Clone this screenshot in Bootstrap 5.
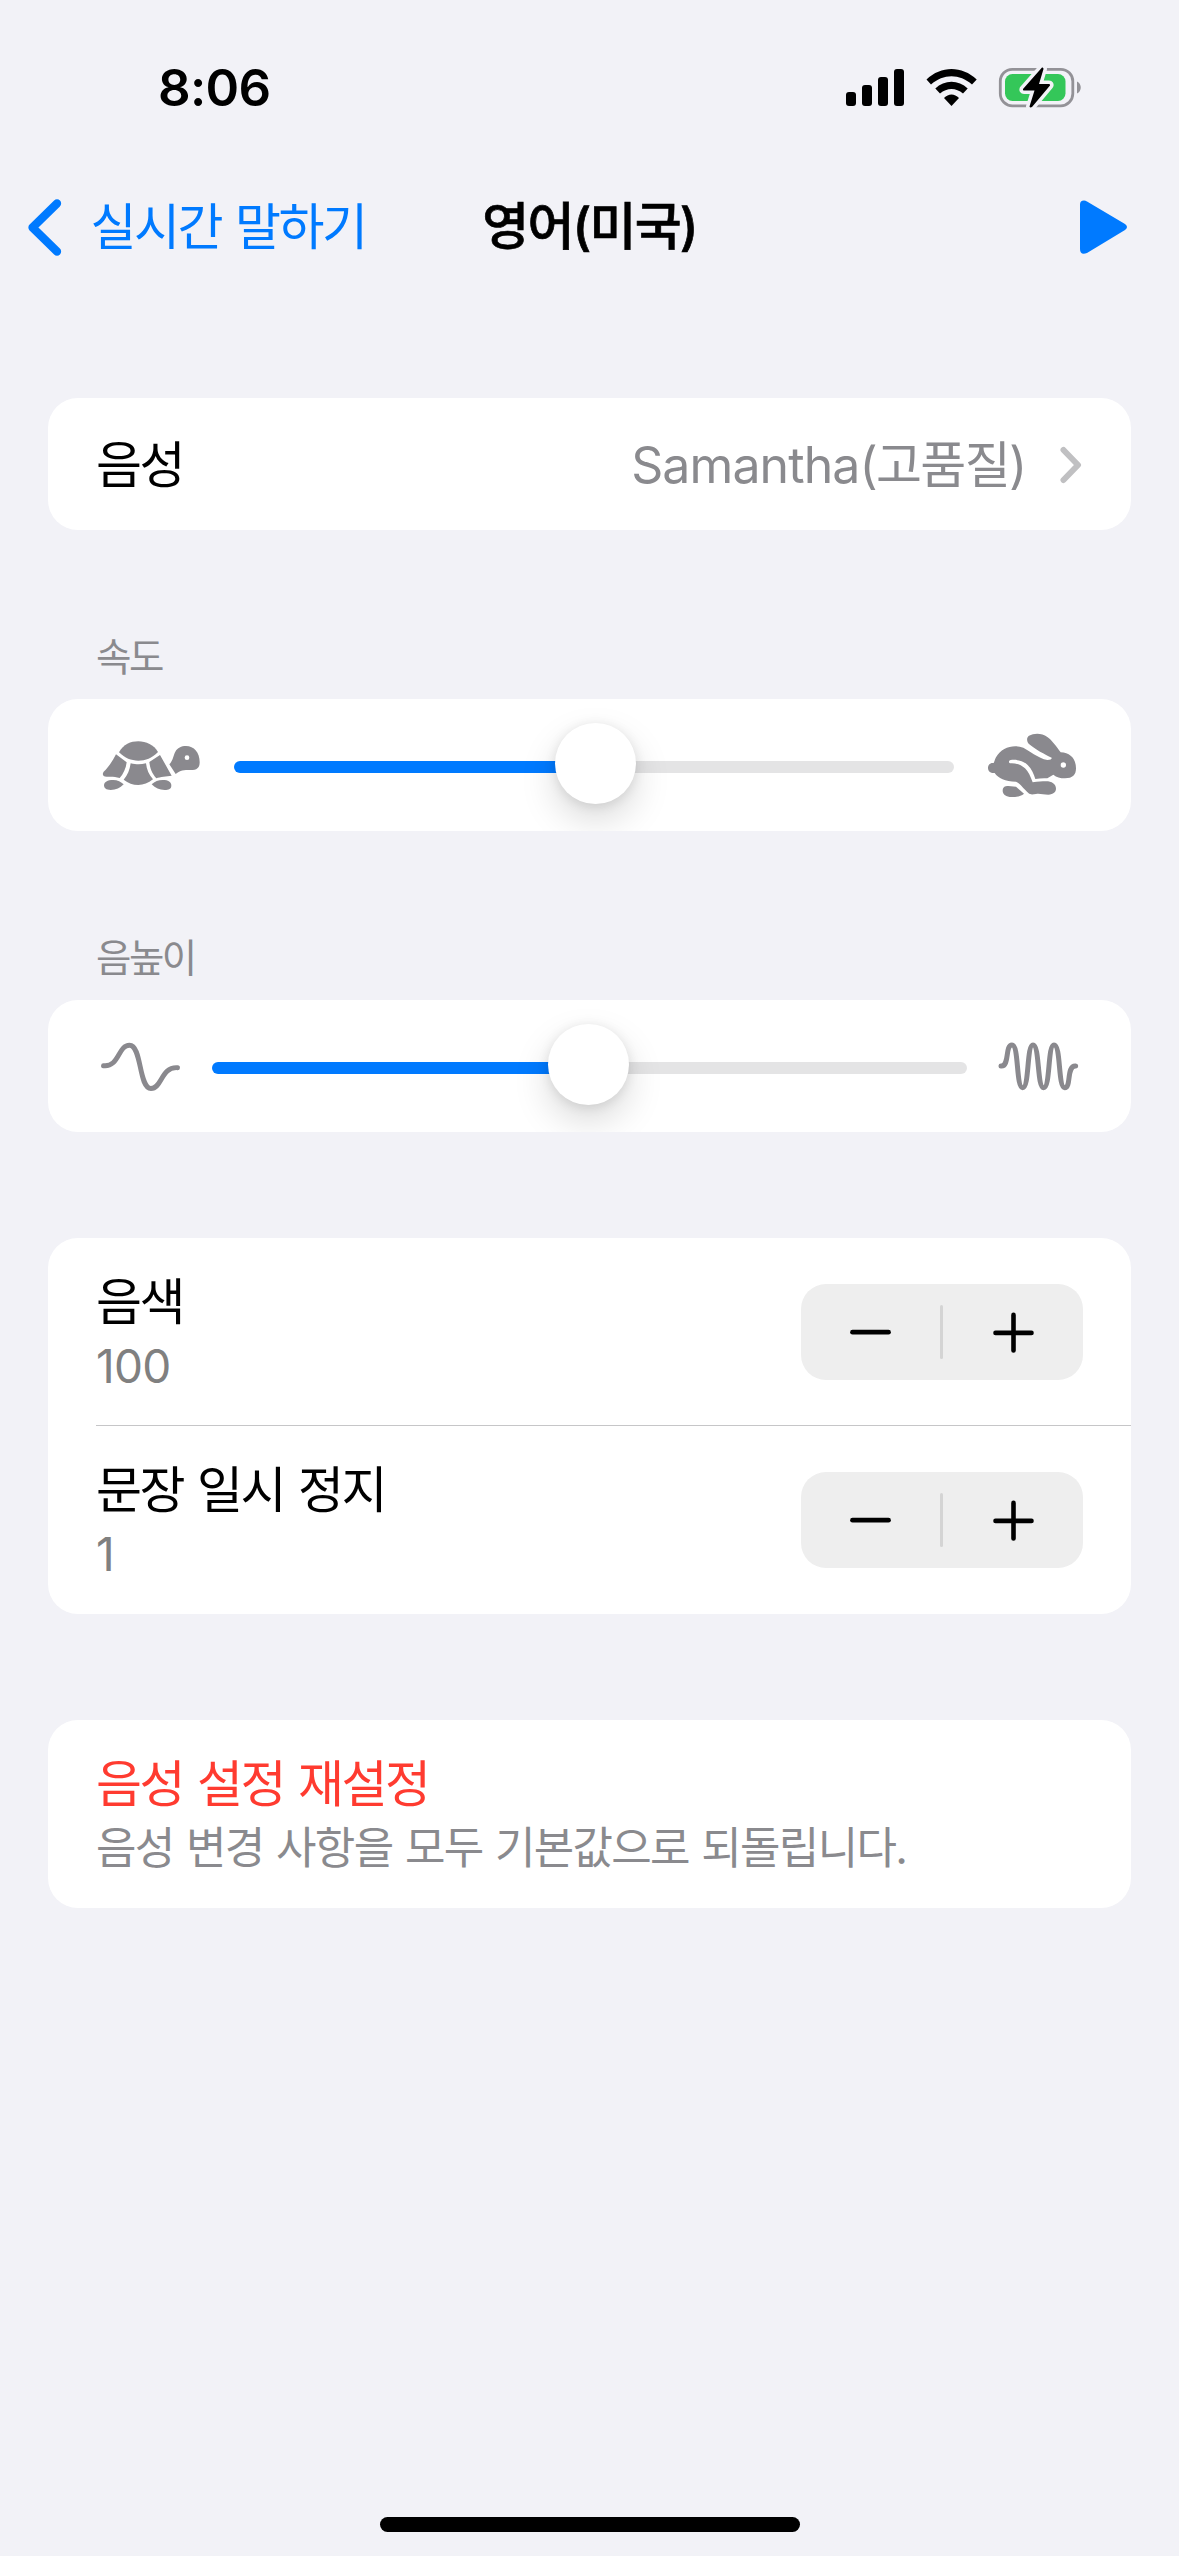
<!DOCTYPE html>
<html lang="ko">
<head>
<meta charset="utf-8">
<meta name="viewport" content="width=device-width, initial-scale=1">
<title>영어(미국)</title>
<link href="https://cdn.jsdelivr.net/npm/bootstrap@5.3.0/dist/css/bootstrap.min.css" rel="stylesheet">
<style>
body{background:#f2f2f7;color:#000;font-family:Inter,"Noto Sans CJK KR",sans-serif;font-size:50px;line-height:62px;letter-spacing:-2.5px;word-spacing:2.4px;min-height:2556px;overflow-x:hidden}
svg{display:block;flex:none}
.status-bar{height:176px;padding:0 96px 0 158px}
.clock{font-size:51px;font-weight:600;letter-spacing:-.7px}
.nav-row{height:102px;padding:0 28px}
.nav-row>*{flex:1 1 0}
.nav-row>.nav-title{flex:0 0 auto;font-size:51px;line-height:62px;font-weight:500;letter-spacing:-1.8px;-webkit-text-stroke:.7px #000}
.play{margin-right:24px}
.back-link{color:#007aff;gap:28.5px}
.settings{padding:120px 48px 0}
.panel{border:0;border-radius:30px;overflow:hidden;background:#fff}
.panel-gap{margin-top:106px}
.cell{min-height:132px;padding:0 48px}
.single-line{padding-top:1px}
.cell-tall{height:188px;padding:33px 48px 0}
.cell-first{height:187px}
.detail{color:#8a8a8e;gap:34.5px;padding-right:1px;letter-spacing:-1.7px}
.latin{letter-spacing:-.9px}
.section-label{margin:103px 48px 18px;font-size:38.5px;line-height:48px;letter-spacing:-2.5px;color:#8a8a8e;font-weight:400}
.sub{padding-top:1px;font-size:44px;line-height:64px;letter-spacing:-1.7px;word-spacing:1.8px;color:#8a8a8e}
.num{font-size:46px;letter-spacing:-.7px;color:#808080}
.divided{height:189px;border-top:1px solid #c6c6c8;margin-left:48px;padding-left:0}
.stepper{width:282px;height:96px;border-radius:25px;background:#eee;margin-top:13px}
.stepper .btn{border:0;height:96px}
.split{width:3px;height:54px;border-radius:2px;background:#d4d4d4;margin:0 .5px 0 -.5px}
.reset{color:#ff3b30}
.slider{appearance:none;-webkit-appearance:none;height:12px;margin-top:4px;min-width:0;flex:1 1 0;padding:0;background:none}
.slider::-webkit-slider-runnable-track{height:12px;border-radius:6px;background:linear-gradient(90deg,#007aff 50%,#e4e4e5 50%)}
.slider::-webkit-slider-thumb{-webkit-appearance:none;width:81px;height:81px;border:0;border-radius:50%;background:#fff;margin-top:-38px;box-shadow:0 2px 12px rgba(0,0,0,.1),0 16px 36px rgba(0,0,0,.15)}
.home-bar{width:420px;height:15px;border-radius:8px;background:#000;margin-bottom:24px}
</style>
<script src="https://cdn.jsdelivr.net/npm/bootstrap@5.3.0/dist/js/bootstrap.bundle.min.js"></script>
</head>
<body class="d-flex flex-column m-0">
<header>
  <div class="status-bar d-flex align-items-center justify-content-between">
    <span class="clock">8:06</span>
    <svg width="237" height="42" viewBox="846 67 237 42">
      <rect x="846" y="92" width="10" height="14" rx="3"/><rect x="862" y="85" width="10" height="21" rx="3"/><rect x="878" y="77" width="10" height="29" rx="3"/><rect x="894" y="69" width="10" height="37" rx="3"/>
      <path d="M926.5 79.5C941 65.500 962 65.500 976.700 79.500L972 84.500C959.500 73.500 943.500 73.500 931 84.500ZM935.300 88.500C944.500 79.600 958.500 79.600 967.700 88.500L963 93.500C956 87.500 947 87.500 940 93.500ZM944 98C948.500 93.300 954.500 93.300 959 98L951.500 106Z"/>
      <rect x="1000.300" y="69.300" width="72.500" height="36.500" rx="12" fill="none" stroke="#939297" stroke-width="2.800"/>
      <path d="M1077 81.500C1082 83.500 1082 91.500 1077 93.500Z" fill="#939297"/>
      <rect x="1005" y="74" width="60.500" height="27" rx="7.500" fill="#34c759"/>
      <path d="M1042 67.500L1023 89Q1022.500 90.500 1024 90.500H1034.500L1029.500 106.500Q1030 108 1032 107L1050 85.500Q1050.500 84 1049 84H1039L1043.500 69Q1043.500 67 1042 67.500Z" stroke="#f2f2f7" stroke-width="7" paint-order="stroke" stroke-linejoin="round"/>
    </svg>
  </div>
  <nav class="nav-row d-flex align-items-center">
    <a class="back-link d-flex align-items-center text-decoration-none" href="#">
      <svg width="34" height="58" viewBox="28 197 34 58"><path d="M57 202.500L32.500 226.500L57 250.500" fill="none" stroke="#007aff" stroke-width="8.300" stroke-linecap="round" stroke-linejoin="round"/></svg>
      <span>실시간 말하기</span>
    </a>
    <h1 class="nav-title m-0">영어(미국)</h1>
    <div class="d-flex justify-content-end">
      <svg class="play" width="47" height="54" viewBox="1080 200 47 54"><path d="M1080 204.500Q1080 200.500 1084 200.500Q1085.500 200.500 1087 201.500L1125 224Q1129 227 1125 230L1087 253Q1080 255.500 1080 249Z" fill="#007aff"/></svg>
    </div>
  </nav>
</header>
<main class="settings flex-grow-1">
  <section class="card panel">
    <div class="cell single-line d-flex align-items-center justify-content-between">
      <span>음성</span>
      <span class="detail d-flex align-items-center"><span><span class="latin">Samantha</span>(고품질)</span>
        <svg width="22" height="38" viewBox="1059.500 445 22 38"><path d="M1063 449L1077.500 464L1063 479" fill="none" stroke="#c0c0c2" stroke-width="6" stroke-linecap="round" stroke-linejoin="round"/></svg>
      </span>
    </div>
  </section>

  <h2 class="section-label">속도</h2>
  <section class="card panel">
    <div class="cell d-flex align-items-center">
      <svg width="138" height="60" viewBox="48 105 414 180" fill="#8a898e">
        <path d="M117 157C130 133 152 124 175 124C198 124 222 135 234 156C215 175 197 182 175 182C153 182 135 175 117 157Z"/>
        <path d="M108 163L140 187C138 205 130 222 119 234C105 229 95 230 80 230C68 230 66 222 71 215C85 203 98 182 108 163Z"/>
        <path d="M152 190C170 194 182 194 198 190C200 208 207 225 219 238C205 250 190 255 175 255C158 255 145 249 131 239C143 225 149 210 152 190Z"/>
        <path d="M208 186L240 165L275 227C260 230 240 230 229 235C216 220 210 205 208 186Z"/>
        <path d="M268 193C280 180 280 165 286 155C292 144 304 138 318 138C342 138 359 158 359 186C359 205 350 210 332 210C310 210 302 210 287 222Z"/>
        <path d="M100 240C112 240 124 246 131 253C120 264 108 270 92 270C78 270 72 264 72 256C72 246 82 240 100 240Z"/>
        <path d="M248 240C265 240 274 246 274 257C274 266 266 270 254 270C238 270 226 264 215 253C224 244 235 240 248 240Z"/>
        <circle cx="321" cy="173" r="7" fill="#fff"/>
      </svg>
      <input class="slider" type="range" min="0" max="1000" value="502" aria-label="속도">
      <svg width="129" height="70" viewBox="-18 90 387 210" fill="#8a898e">
        <path d="M302 157C290 140 275 120 262 111C245 98 222 99 207 107C199 113 200 124 206 131C225 148 255 163 275 173C276 177 272 180 262 180C235 175 205 150 190 143C160 132 125 142 108 172C104 180 103 186 101 189C90 187 84 195 84 204C84 214 92 220 104 219C115 235 135 244 168 245C180 250 190 265 205 279C212 285 218 283 228 282C240 280 250 284 265 284C280 283 288 275 288 266C288 252 275 244 258 244C245 244 235 244 218 247C212 230 205 215 195 205C182 192 165 189 150 190C145 188 146 181 152 180C170 178 190 182 203 195C216 208 221 222 226 237C238 235 250 234 262 235L280 224C290 232 300 235 315 235C338 235 348 225 348 205C348 178 332 158 302 157Z"/>
        <path d="M145 258L168 260L192 281C183 288 172 291 155 291C138 291 128 283 128 272C128 262 134 258 145 258Z"/>
        <circle cx="310" cy="195" r="8" fill="#fff"/>
      </svg>
    </div>
  </section>

  <h2 class="section-label">음높이</h2>
  <section class="card panel">
    <div class="cell d-flex align-items-center">
      <svg width="116" height="60" viewBox="96 1036 116 60"><path d="M103.500 1065.700C119 1067.500 118 1045.200 129.500 1045.200C142 1045.200 138.500 1088.500 151 1088.500C162 1088.500 161 1066.500 177.500 1067.700" fill="none" stroke="#8a898e" stroke-width="4.900" stroke-linecap="round"/></svg>
      <input class="slider" type="range" min="0" max="1000" value="499" aria-label="음높이">
      <svg width="116" height="60" viewBox="21 48 348 180"><path d="M123 138C150 140 134 75 156 75C177 75 168 203 188 203C208 203 200 75 219 75C239 75 231 203 251 203C271 203 263 75 282 75C303 75 294 203 314 203C335 203 318 136 347 138" fill="none" stroke="#8a898e" stroke-width="15" stroke-linecap="round"/></svg>
    </div>
  </section>

  <section class="card panel panel-gap">
    <div class="cell-tall cell-first d-flex justify-content-between">
      <div><div>음색</div><div class="sub num">100</div></div>
      <div class="stepper d-flex align-items-center">
        <button class="btn p-0 flex-fill d-flex align-items-center justify-content-center" aria-label="음색 줄이기"><svg width="41" height="41" viewBox="0 0 41 41"><path d="M2.500 20.200H38.500" stroke="#000" stroke-width="4.800" stroke-linecap="round"/></svg></button>
        <span class="split"></span>
        <button class="btn p-0 flex-fill d-flex align-items-center justify-content-center" aria-label="음색 늘리기"><svg width="41" height="41" viewBox="0 0 41 41"><path d="M2.500 20.900H38.500M20.500 2.900V38.500" stroke="#000" stroke-width="4.600" stroke-linecap="round"/></svg></button>
      </div>
    </div>
    <div class="cell-tall divided d-flex justify-content-between">
      <div><div>문장 일시 정지</div><div class="sub num">1</div></div>
      <div class="stepper d-flex align-items-center">
        <button class="btn p-0 flex-fill d-flex align-items-center justify-content-center" aria-label="문장 일시 정지 줄이기"><svg width="41" height="41" viewBox="0 0 41 41"><path d="M2.500 20.200H38.500" stroke="#000" stroke-width="4.800" stroke-linecap="round"/></svg></button>
        <span class="split"></span>
        <button class="btn p-0 flex-fill d-flex align-items-center justify-content-center" aria-label="문장 일시 정지 늘리기"><svg width="41" height="41" viewBox="0 0 41 41"><path d="M2.500 20.900H38.500M20.500 2.900V38.500" stroke="#000" stroke-width="4.600" stroke-linecap="round"/></svg></button>
      </div>
    </div>
  </section>

  <section class="card panel panel-gap">
    <div class="cell-tall">
      <div class="reset">음성 설정 재설정</div>
      <div class="sub">음성 변경 사항을 모두 기본값으로 되돌립니다.</div>
    </div>
  </section>
</main>
<footer class="d-flex justify-content-center"><div class="home-bar"></div></footer>
</body>
</html>
